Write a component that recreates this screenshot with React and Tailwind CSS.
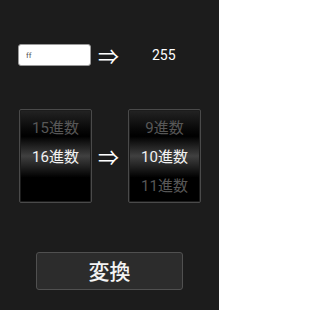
import React, { useState } from "react";

const Picker = ({ items, selected }) => {
  return (
    <div className="w-[73px] h-[94px] rounded-[2px] border border-[#4a4a4a] p-px">
      <div className="h-full pt-[3px] bg-[linear-gradient(to_bottom,#222_0%,#080808_20%,#000_28%,#404040_50%,#000_74%,#000_100%)]">
        {items.map((item, i) => (
          <div
            key={i}
            className={
              "h-[29px] flex items-center justify-center text-[15px] " +
              (i === selected ? "text-[#f2f2f2]" : "text-[#575757]")
            }
          >
            {item}
          </div>
        ))}
      </div>
    </div>
  );
};

const App = () => {
  const [value, setValue] = useState("ff");

  return (
    <div className="w-[219px] h-[310px] bg-[#1c1c1c] pt-[44px] font-['Roboto','Noto_Sans_CJK_JP',sans-serif] overflow-hidden">
      <div className="flex items-center h-[22px] pl-[18px]">
        <input
          value={value}
          onChange={(e) => setValue(e.target.value)}
          className="w-[73px] h-[22px] bg-white rounded-[3px] border border-[#9a9a9a] pl-[7px] text-[8px] text-[#555] outline-none"
        />
        <span className="ml-[7px] w-[21px] text-[21px] leading-none text-white font-['Noto_Sans_CJK_JP',sans-serif]">
          ⇒
        </span>
        <span className="ml-[33px] text-[14px] text-white">255</span>
      </div>

      <div className="flex items-center mt-[43px] pl-[19px]">
        <Picker items={["15進数", "16進数", ""]} selected={1} />
        <span className="ml-[6px] w-[21px] text-[21px] leading-none text-white font-['Noto_Sans_CJK_JP',sans-serif]">
          ⇒
        </span>
        <div className="ml-[9px]">
          <Picker items={["9進数", "10進数", "11進数"]} selected={1} />
        </div>
      </div>

      <button className="mt-[49px] ml-[36px] w-[147px] h-[38px] rounded-[3px] border border-[#505050] bg-[#2c2c2c] text-[21px] font-medium text-[#f4f4f4] font-['Noto_Sans_CJK_JP',sans-serif] flex items-center justify-center">
        変換
      </button>
    </div>
  );
};

export default App;
